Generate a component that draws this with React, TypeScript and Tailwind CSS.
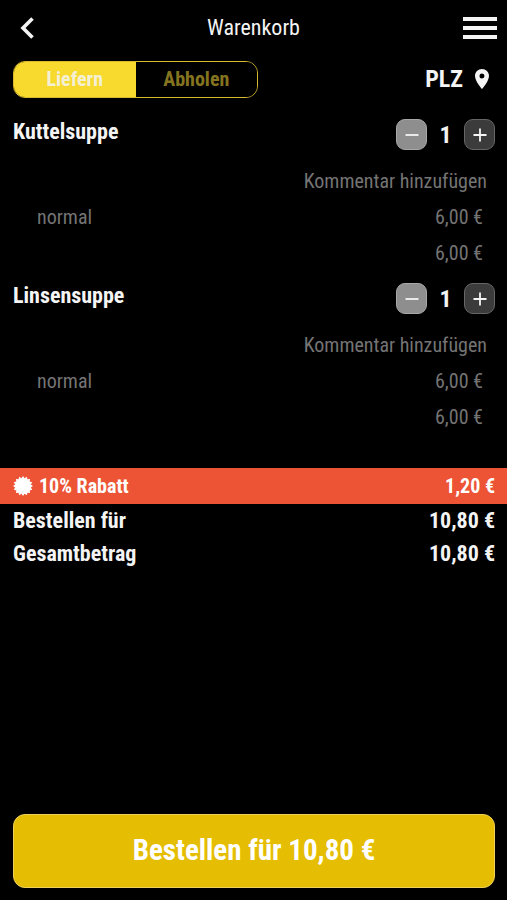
import { useState } from "react";

const items = [
  { name: "Kuttelsuppe", variant: "normal", price: "6,00 €" },
  { name: "Linsensuppe", variant: "normal", price: "6,00 €" },
];

function Minus() {
  return (
    <svg viewBox="0 0 14 14" className="size-3.5" aria-hidden="true">
      <path d="M0.5 7h13" stroke="currentColor" strokeWidth="1.8" />
    </svg>
  );
}

function Plus() {
  return (
    <svg viewBox="0 0 14 14" className="size-3.5" aria-hidden="true">
      <path d="M0.5 7h13M7 0.5v13" stroke="currentColor" strokeWidth="1.8" />
    </svg>
  );
}

function Badge() {
  const points = Array.from({ length: 32 }, (_, i) => {
    const radius = i % 2 === 0 ? 10 : 8;
    const angle = (i * Math.PI) / 16;
    return `${10 + radius * Math.sin(angle)},${10 - radius * Math.cos(angle)}`;
  }).join(" ");
  return (
    <svg viewBox="0 0 20 20" className="size-5" aria-hidden="true">
      <polygon points={points} fill="currentColor" />
    </svg>
  );
}

function CartItem({ name, variant, price }: { name: string; variant: string; price: string }) {
  const [count, setCount] = useState(1);
  return (
    <li className="text-xl text-[#747474]">
      <div className="flex h-[49px] items-center justify-between text-[#f4f4f4]">
        <h2 className="pb-1 text-[22px] font-bold">{name}</h2>
        <div className="flex items-center">
          <button
            type="button"
            aria-label={`${name} verringern`}
            onClick={() => setCount(Math.max(1, count - 1))}
            className="flex size-[31px] items-center justify-center rounded-[9px] border border-[#a8a8a8] bg-[#8e8e8e]"
          >
            <Minus />
          </button>
          <span className="w-[37px] text-center text-2xl font-bold">{count}</span>
          <button
            type="button"
            aria-label={`${name} erhöhen`}
            onClick={() => setCount(count + 1)}
            className="flex size-[31px] items-center justify-center rounded-[9px] border border-[#666666] bg-[#3b3b3b]"
          >
            <Plus />
          </button>
        </div>
      </div>
      <div className="flex h-11 items-center justify-end pr-2">
        <button type="button">Kommentar hinzufügen</button>
      </div>
      <div className="flex h-7 items-center justify-between pr-3 pl-6">
        <span>{variant}</span>
        <span>{price}</span>
      </div>
      <div className="flex h-[43px] items-center justify-end pr-3">{price}</div>
    </li>
  );
}

export default function App() {
  const [mode, setMode] = useState("Liefern");
  return (
    <div className="flex min-h-screen flex-col bg-black font-['Roboto_Condensed','Liberation_Sans_Narrow',Roboto,sans-serif] text-[#f4f4f4]">
      <header className="grid h-[55px] grid-cols-[1fr_auto_1fr] items-center px-2.5">
        <button type="button" aria-label="Zurück" className="w-fit pl-2.5">
          <svg viewBox="0 0 14 22" className="h-[22px] w-3.5" aria-hidden="true">
            <path d="M12.5 1.5 3 11l9.5 9.5" fill="none" stroke="currentColor" strokeWidth="3.6" />
          </svg>
        </button>
        <h1 className="text-center text-[22px]">Warenkorb</h1>
        <button type="button" aria-label="Menü" className="justify-self-end">
          <svg viewBox="0 0 34 24" className="h-6 w-[34px]" aria-hidden="true">
            <path d="M0 3h34M0 12h34M0 21h34" stroke="currentColor" strokeWidth="4" />
          </svg>
        </button>
      </header>
      <main className="flex grow flex-col">
        <div className="flex h-12 items-center justify-between pr-3 pl-[13px]">
          <div className="flex h-[37px] w-[245px] overflow-hidden rounded-xl border border-[#d8b92c] text-xl font-bold">
            <button
              type="button"
              aria-pressed={mode === "Liefern"}
              onClick={() => setMode("Liefern")}
              className="flex-1 bg-[#f8d92e] text-[#f3f0d6] aria-[pressed=false]:bg-black aria-[pressed=false]:text-[#85741f]"
            >
              Liefern
            </button>
            <button
              type="button"
              aria-pressed={mode === "Abholen"}
              onClick={() => setMode("Abholen")}
              className="flex-1 bg-[#f8d92e] text-[#f3f0d6] aria-[pressed=false]:bg-black aria-[pressed=false]:text-[#85741f]"
            >
              Abholen
            </button>
          </div>
          <button type="button" className="flex items-center gap-3 pr-1.5 text-2xl font-bold">
            PLZ
            <svg viewBox="5 2 14 20" className="h-5 w-3.5" aria-hidden="true">
              <path
                fill="currentColor"
                d="M12 2C8.13 2 5 5.13 5 9c0 5.25 7 13 7 13s7-7.75 7-13c0-3.87-3.13-7-7-7zm0 9.5a2.5 2.5 0 1 1 0-5 2.5 2.5 0 0 1 0 5z"
              />
            </svg>
          </button>
        </div>
        <ul className="pt-[7px] pr-3 pl-[13px]">
          {items.map((item) => (
            <CartItem key={item.name} {...item} />
          ))}
        </ul>
        <dl className="mt-[30px] text-[22px] font-bold">
          <div className="flex h-9 items-center justify-between bg-[#ec5435] pr-3 pl-[13px] text-xl text-white">
            <dt className="flex items-center gap-1.5">
              <Badge />
              10% Rabatt
            </dt>
            <dd>1,20 €</dd>
          </div>
          <div className="flex h-[33px] items-center justify-between pr-3 pl-[13px]">
            <dt>Bestellen für</dt>
            <dd>10,80 €</dd>
          </div>
          <div className="flex h-[33px] items-center justify-between pr-3 pl-[13px]">
            <dt>Gesamtbetrag</dt>
            <dd>10,80 €</dd>
          </div>
        </dl>
      </main>
      <footer className="pr-3 pb-3 pl-[13px]">
        <button
          type="button"
          className="h-[74px] w-full rounded-xl border border-[#efd15a] bg-[#e5bd02] text-[29px] font-bold text-white"
        >
          Bestellen für 10,80 €
        </button>
      </footer>
    </div>
  );
}
